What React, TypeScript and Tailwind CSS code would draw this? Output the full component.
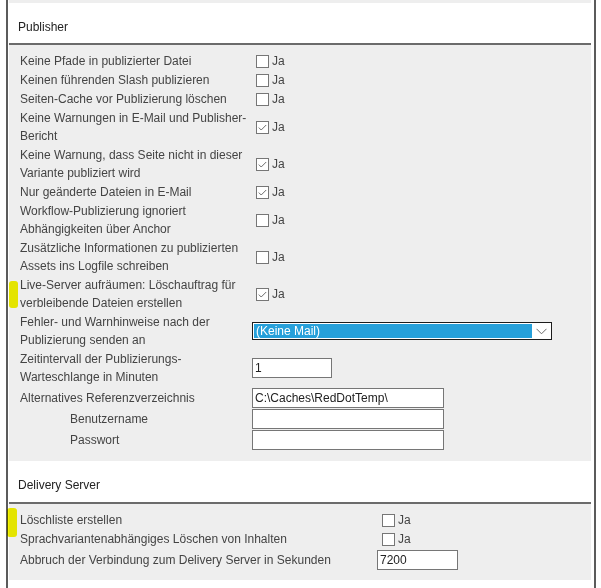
import type { ReactNode } from "react";

type Control =
  | { kind: "check"; checked: boolean }
  | { kind: "select"; value: string }
  | { kind: "input"; value: string; width: string };

interface Row {
  lines: string[];
  indent?: boolean;
  control: Control;
  rowH?: string;
}

const publisherRows: Row[] = [
  { lines: ["Keine Pfade in publizierter Datei"], control: { kind: "check", checked: false } },
  { lines: ["Keinen führenden Slash publizieren"], control: { kind: "check", checked: false } },
  { lines: ["Seiten-Cache vor Publizierung löschen"], control: { kind: "check", checked: false } },
  {
    lines: ["Keine Warnungen in E-Mail und Publisher-", "Bericht"],
    control: { kind: "check", checked: true },
  },
  {
    lines: ["Keine Warnung, dass Seite nicht in dieser", "Variante publiziert wird"],
    control: { kind: "check", checked: true },
  },
  { lines: ["Nur geänderte Dateien in E-Mail"], control: { kind: "check", checked: true } },
  {
    lines: ["Workflow-Publizierung ignoriert", "Abhängigkeiten über Anchor"],
    control: { kind: "check", checked: false },
  },
  {
    lines: ["Zusätzliche Informationen zu publizierten", "Assets ins Logfile schreiben"],
    control: { kind: "check", checked: false },
  },
  {
    lines: ["Live-Server aufräumen: Löschauftrag für", "verbleibende Dateien erstellen"],
    control: { kind: "check", checked: true },
  },
  {
    lines: ["Fehler- und Warnhinweise nach der", "Publizierung senden an"],
    control: { kind: "select", value: "(Keine Mail)" },
  },
  {
    lines: ["Zeitintervall der Publizierungs-", "Warteschlange in Minuten"],
    control: { kind: "input", value: "1", width: "w-[80px]" },
  },
  {
    lines: ["Alternatives Referenzverzeichnis"],
    control: { kind: "input", value: "C:\\Caches\\RedDotTemp\\", width: "w-[192px]" },
    rowH: "h-[21px]",
  },
  {
    lines: ["Benutzername"],
    indent: true,
    control: { kind: "input", value: "", width: "w-[192px]" },
    rowH: "h-[20px]",
  },
  {
    lines: ["Passwort"],
    indent: true,
    control: { kind: "input", value: "", width: "w-[192px]" },
    rowH: "h-[20px]",
  },
];

const deliveryRows: Row[] = [
  { lines: ["Löschliste erstellen"], control: { kind: "check", checked: false } },
  {
    lines: ["Sprachvariantenabhängiges Löschen von Inhalten"],
    control: { kind: "check", checked: false },
  },
  {
    lines: ["Abbruch der Verbindung zum Delivery Server in Sekunden"],
    control: { kind: "input", value: "7200", width: "w-[81px]" },
    rowH: "h-[21px]",
  },
];

function CheckBox({ checked }: { checked: boolean }) {
  return (
    <span className="flex h-[13px] w-[13px] items-center justify-center border border-[#767676] bg-white">
      {checked && (
        <svg width="11" height="11" viewBox="0 0 11 11">
          <polyline
            points="1.8,5.6 4.2,8 9.2,3"
            fill="none"
            stroke="#6d6d6d"
            strokeWidth="1"
          />
        </svg>
      )}
    </span>
  );
}

function ControlCell({ control, checkGap }: { control: Control; checkGap: string }) {
  if (control.kind === "check") {
    return (
      <div className={`flex items-center ${checkGap}`}>
        <CheckBox checked={control.checked} />
        <span className="ml-[3px] text-[12px] leading-[18px] text-[#444]">Ja</span>
      </div>
    );
  }
  if (control.kind === "select") {
    return (
      <div className="flex h-[18px] w-[300px] border border-[#1c1c1c] bg-white p-px">
        <div className="flex flex-1 items-center bg-[#26a0da] pl-[2px] text-[12px] leading-[14px] text-white">
          {control.value}
        </div>
        <div className="flex w-[18px] items-center justify-center">
          <svg width="11" height="7" viewBox="0 0 11 7">
            <polyline points="0.5,0.8 5.5,5.8 10.5,0.8" fill="none" stroke="#6a6a6a" strokeWidth="1" />
          </svg>
        </div>
      </div>
    );
  }
  return (
    <div
      className={`flex h-[20px] items-center border border-[#767676] bg-white pl-[2px] text-[12px] text-[#222] ${control.width}`}
    >
      {control.value}
    </div>
  );
}

function FormRows({
  rows,
  cols,
  checkGap,
}: {
  rows: Row[];
  cols: string;
  checkGap: string;
}) {
  return (
    <div className="flex flex-col gap-px">
      {rows.map((r, i) => (
        <div key={i} className={`grid items-center ${cols} ${r.rowH ?? ""}`}>
          <div
            className={`whitespace-nowrap text-[12px] leading-[18px] text-[#444] ${
              r.indent ? "pl-[50px]" : ""
            }`}
          >
            {r.lines.map((l, j) => (
              <div key={j}>{l}</div>
            ))}
          </div>
          <ControlCell control={r.control} checkGap={checkGap} />
        </div>
      ))}
    </div>
  );
}

function SectionHeader({ title, h }: { title: string; h: string }) {
  return (
    <>
      <div className={`${h} pl-[9px] pt-[15px] text-[12px] leading-[18px] text-[#222]`}>
        {title}
      </div>
      <div className="h-[2px] bg-[#6b6b6b]" />
    </>
  );
}

function Panel({ children, cls }: { children: ReactNode; cls: string }) {
  return <div className={`bg-[#eeeeee] pl-[11px] ${cls}`}>{children}</div>;
}

export default function App() {
  return (
    <div
      className="relative h-[588px] w-[601px] overflow-hidden bg-white"
      style={{ fontFamily: '"Liberation Sans", Arial, sans-serif' }}
    >
      <div className="ml-[6px] h-full w-[590px] border-x-2 border-[#5b5b5b] pl-px pr-[3px]">
        <div className="h-[3px] bg-[#eeeeee]" />

        <SectionHeader title="Publisher" h="h-[40px]" />
        <Panel cls="h-[416px] pt-[7px]">
          <FormRows rows={publisherRows} cols="grid-cols-[232px_1fr]" checkGap="pl-[4px]" />
        </Panel>

        <SectionHeader title="Delivery Server" h="h-[41px]" />
        <Panel cls="h-[76px] pt-[7px]">
          <FormRows rows={deliveryRows} cols="grid-cols-[357px_1fr]" checkGap="pl-[5px]" />
        </Panel>
      </div>

      {/* highlighter marks */}
      <div className="absolute left-[9px] top-[281px] h-[27px] w-[9px] rounded-[3px] bg-[#f5f500] mix-blend-multiply" />
      <div className="absolute left-[7px] top-[508px] h-[29px] w-[10px] rounded-[3px] bg-[#f5f500] mix-blend-multiply" />
    </div>
  );
}
